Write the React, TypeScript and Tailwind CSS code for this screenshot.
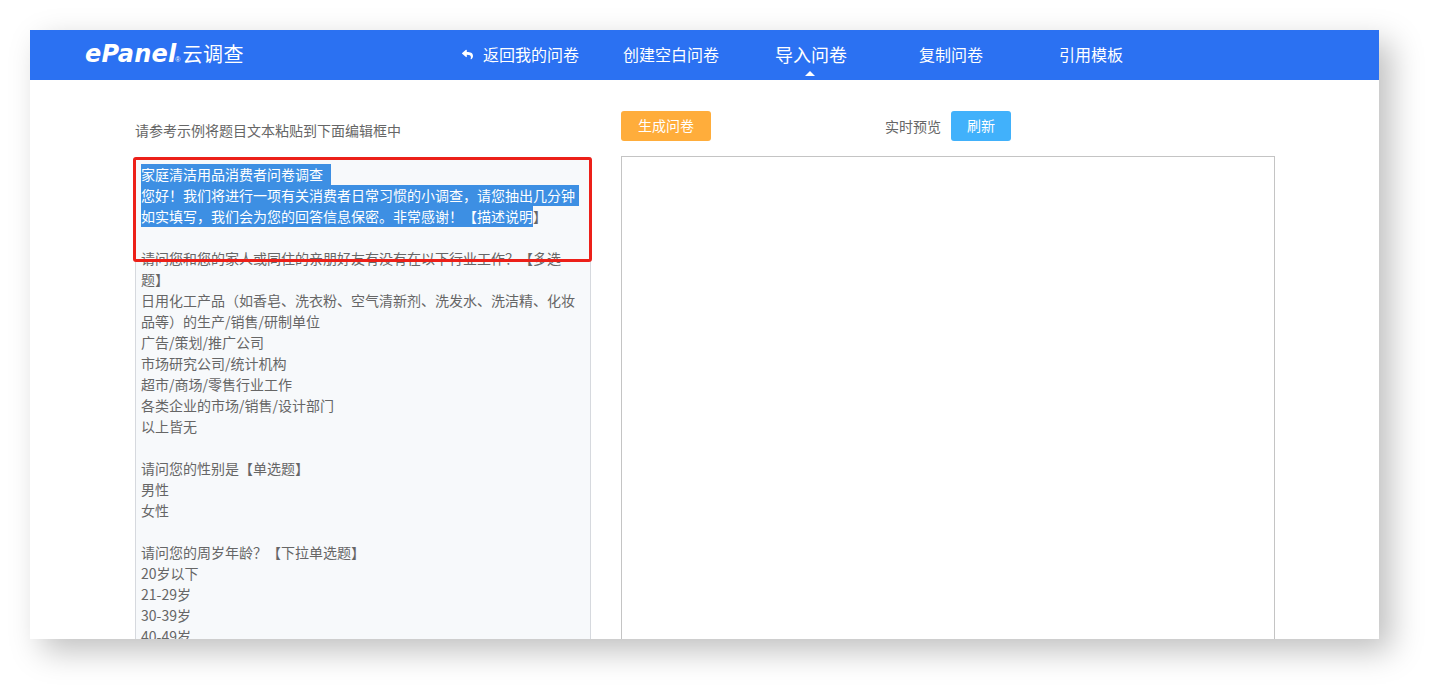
import { FaReply } from "react-icons/fa";

const fontStack = "font-['Noto_Sans_CJK_SC','Noto_Sans',sans-serif]";

const bodyLines = [
  "",
  "请问您和您的家人或同住的亲朋好友有没有在以下行业工作？【多选",
  "题】",
  "日用化工产品（如香皂、洗衣粉、空气清新剂、洗发水、洗洁精、化妆",
  "品等）的生产/销售/研制单位",
  "广告/策划/推广公司",
  "市场研究公司/统计机构",
  "超市/商场/零售行业工作",
  "各类企业的市场/销售/设计部门",
  "以上皆无",
  "",
  "请问您的性别是【单选题】",
  "男性",
  "女性",
  "",
  "请问您的周岁年龄？【下拉单选题】",
  "20岁以下",
  "21-29岁",
  "30-39岁",
  "40-49岁",
];

function Selected({ text, className }: { text: string; className?: string }) {
  return <span className={`inline-block h-[21px] bg-[#3d8fe3] text-white ${className ?? ""}`}>{text}</span>;
}

function Header() {
  return (
    <header className="flex h-[50px] shrink-0 items-center bg-[#2b71f2] pb-[2px] text-white">
      <div className="ml-[55px] flex w-[377px] items-center">
        <span className="font-['DejaVu_Sans',sans-serif] text-[24px] leading-none font-bold tracking-[0.2px] italic">ePanel</span>
        <span className="mt-[10px] ml-[-1px] font-['Liberation_Sans',sans-serif] text-[7px] leading-none">®</span>
        <span className="ml-[2px] text-[20px] leading-none tracking-[0.5px]">云调查</span>
      </div>
      <FaReply className="h-[11px] w-[11px]" />
      <span className="ml-[10px] text-[16px] leading-none">返回我的问卷</span>
      <span className="ml-[44px] text-[16px] leading-none">创建空白问卷</span>
      <span className="relative ml-[56px] w-[73px] text-[18px] leading-none">
        导入问卷
        <span className="absolute top-[26px] left-[30px] h-0 w-0 border-x-[5px] border-b-[5px] border-x-transparent border-b-white" />
      </span>
      <span className="ml-[71px] text-[16px] leading-none">复制问卷</span>
      <span className="ml-[76px] text-[16px] leading-none">引用模板</span>
    </header>
  );
}

function Editor() {
  return (
    <div className="relative ml-[105px] w-[456px] shrink-0">
      <div className="flex h-[77px] items-end pb-[17px] text-[14px] leading-[20px] text-[#666]">请参考示例将题目文本粘贴到下面编辑框中</div>
      <div className="h-[600px] border border-[#d6d9de] bg-[#f7f9fb] px-[5px] py-[6px] text-[14px] leading-[21px] whitespace-nowrap text-[#666]">
        <div className="h-[21px]">
          <Selected text="家庭清洁用品消费者问卷调查" className="pr-[8px]" />
        </div>
        <div className="h-[21px]">
          <Selected text="您好！我们将进行一项有关消费者日常习惯的小调查，请您抽出几分钟" className="pr-[4px]" />
        </div>
        <div className="h-[21px]">
          <Selected text="如实填写，我们会为您的回答信息保密。非常感谢！【描述说明" />】
        </div>
        {bodyLines.map((line, i) => (
          <div key={i} className="h-[21px]">
            {line}
          </div>
        ))}
      </div>
      <div className="absolute top-[77px] -left-[2px] h-[105px] w-[459px] rounded-[3px] border-[3px] border-[#ec2019]" />
    </div>
  );
}

function Preview() {
  return (
    <div className="ml-[30px] w-[654px] shrink-0">
      <div className="flex h-[76px] items-start pt-[31px]">
        <div className="flex h-[30px] items-center">
          <button className="h-[30px] w-[90px] rounded-[3px] bg-[#ffad3b] pb-[2px] text-[14px] text-white">生成问卷</button>
          <span className="ml-[174px] text-[14px] text-[#666]">实时预览</span>
          <button className="ml-[10px] h-[30px] w-[60px] rounded-[3px] bg-[#41b1fb] pb-[2px] text-[14px] text-white">刷新</button>
        </div>
      </div>
      <div className="h-[600px] border border-[#c4c4c4] bg-white" />
    </div>
  );
}

export default function App() {
  return (
    <div className={`h-[691px] w-[1432px] overflow-hidden bg-white pt-[30px] pl-[30px] ${fontStack}`}>
      <div className="flex h-[609px] w-[1349px] flex-col overflow-hidden bg-white shadow-[12px_12px_30px_rgba(0,0,0,0.25)]">
        <Header />
        <main className="flex min-h-0 flex-1 items-start">
          <Editor />
          <Preview />
        </main>
      </div>
    </div>
  );
}
